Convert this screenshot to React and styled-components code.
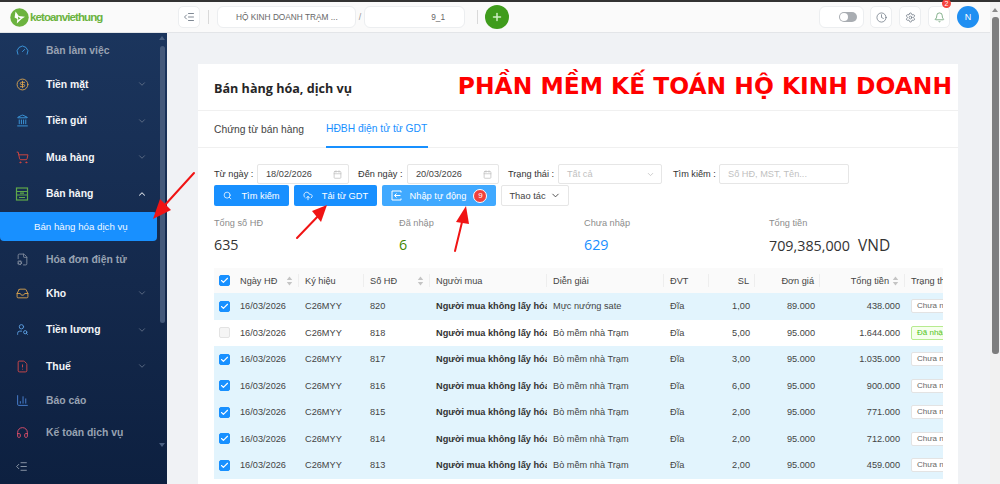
import React from "react";
import styled, { createGlobalStyle } from "styled-components";
import {
  Gauge, CircleDollarSign, Landmark, ShoppingCart, FileCog, Inbox, UserSearch, FileWarning,
  ChartColumn, Headphones, IndentDecrease, ChevronDown, ChevronUp, Plus, Settings, Bell,
  Search, CloudUpload, Calendar, Check, Clock,
} from "lucide-react";

const Global = createGlobalStyle`
  html, body { margin: 0; padding: 0; height: 484px; overflow: hidden; }
  body { font-family: "Liberation Sans", Arial, sans-serif; font-size: 9.2px; color: #333; }
  * { box-sizing: border-box; }
`;

const Page = styled.div`
  position: relative; width: 1000px; height: 484px; overflow: hidden;
  display: flex; flex-direction: column; background: #f0f2f5;
`;
const TopStrip = styled.div`height: 2px; flex: none; background: #333;`;
const Body = styled.div`flex: 1; display: flex; min-height: 0;`;
const Main = styled.div`flex: 1; display: flex; flex-direction: column; min-width: 0;`;

const Header = styled.header`
  height: 31px; flex: none; display: flex; align-items: center;
  background: #fafafa; border-bottom: 1px solid #e3e5e8; padding-right: 11px;
`;
const LogoWrap = styled.div`width: 178px; flex: none; display: flex; align-items: center; padding-left: 10px; gap: 1px;`;
const LogoText = styled.span`
  font: bold 11.5px "Liberation Sans", sans-serif; color: #6cb33f; letter-spacing: -0.9px;
`;
const IconCard = styled.button`
  width: 22px; height: 22px; flex: none; padding: 0; display: flex; align-items: center; justify-content: center;
  background: #fff; border: 1px solid #eceef0; border-radius: 5px; color: ${p => p.$c || "#5f6b78"};
  margin-left: ${p => p.$ml || 0}px;
`;
const VSep = styled.span`width: 1px; height: 14px; flex: none; background: #d9d9d9; margin: 0 ${p => p.$mr || 8}px 0 ${p => p.$ml || 8}px;`;
const Crumb = styled.div`
  height: 22px; flex: none; width: ${p => p.$w}px; padding: 0 ${p => p.$pr || 0}px 0 ${p => p.$pl || 0}px;
  display: flex; align-items: center; justify-content: ${p => p.$end ? "flex-end" : "flex-start"};
  background: #fff; border: 1px solid #eceef0; border-radius: 6px; font-size: 8.3px; color: #666; white-space: nowrap;
`;
const Slash = styled.span`width: 8px; flex: none; text-align: center; color: #999; font-size: 9px;`;
const AddBtn = styled.button`
  width: 24px; height: 24px; border-radius: 50%; border: 0; padding: 0; flex: none; background: #3f9c1c; color: #cfeec3;
  display: flex; align-items: center; justify-content: center;
`;
const Spacer = styled.div`flex: 1;`;
const ToggleCard = styled.div`
  width: 45px; height: 22px; display: flex; align-items: center; justify-content: flex-end; padding-right: 6px;
  background: #fff; border: 1px solid #eceef0; border-radius: 6px;
`;
const Toggle = styled.span`
  width: 18px; height: 10px; border-radius: 5px; background: #a9adb2; position: relative; display: block;
  &::after { content: ""; position: absolute; left: 1px; top: 1px; width: 8px; height: 8px; border-radius: 50%; background: #fff; }
`;
const BellWrap = styled.div`position: relative; margin-left: 7px; flex: none;`;
const BellBadge = styled.span`
  position: absolute; top: -7px; right: -1px; width: 9px; height: 9px; border-radius: 50%;
  background: #f5423c; color: #fff; font-size: 7px; line-height: 9px; text-align: center;
`;
const Avatar = styled.div`
  width: 22px; height: 22px; border-radius: 50%; background: #1f8ff2; color: #fff; font-size: 9px;
  display: flex; align-items: center; justify-content: center; margin-left: 7px; flex: none;
`;

const Row = styled.div`flex: 1; display: flex; min-height: 0;`;
const Side = styled.aside`
  width: 167px; flex: none; display: flex; position: relative;
  background: linear-gradient(180deg, #1b355d 0%, #14294c 55%, #0d2040 100%);
`;
const Nav = styled.nav`width: 157px; flex: none; padding-top: 1px; display: flex; flex-direction: column;`;
const NavItem = styled.div`
  height: ${p => p.$parent ? 36.5 : 32}px; flex: none; display: flex; align-items: center; padding-left: 15px; gap: 17px;
  font-weight: bold; font-size: 10.4px; color: ${p => p.$parent ? "#f3f5f8" : "#98a2b2"}; position: relative;
`;
const NavIcon = styled.span`width: 14px; display: flex; justify-content: center; flex: none; color: ${p => p.$c};`;
const NavChev = styled.span`position: absolute; left: 137px; top: 50%; margin-top: -5px; display: flex; color: ${p => p.$open ? "#dbe0e7" : "#66758c"};`;
const SubItem = styled.div`
  height: 29px; flex: none; margin-bottom: 2px; background: #1890ff; color: #f2f8ff; border-radius: 0 4px 4px 4px;
  display: flex; align-items: center; padding-left: 34px; font-size: 9.7px;
`;
const NavFoot = styled.div`margin-top: auto; height: 35px; padding-left: 15px; display: flex; align-items: center; color: #a3acba;`;
const SideBar = styled.div`
  width: 10px; flex: none; display: flex; flex-direction: column; align-items: center; padding-top: 3px;
`;
const Tri = styled.span`
  width: 0; height: 0; border-left: 3.5px solid transparent; border-right: 3.5px solid transparent; flex: none;
  ${p => p.$down ? `border-top: 4px solid ${p.$c};` : `border-bottom: 4px solid ${p.$c};`}
`;
const SideThumb = styled.div`width: 5px; height: 277px; margin-top: 6px; border-radius: 3px; background: #44597a; flex: none;`;
const SideDown = styled.div`margin-top: 120px; flex: none; display: flex;`;

const Content = styled.main`flex: 1; min-width: 0; overflow: hidden; padding: 31px 32px 0 31px;`;
const Card = styled.section`background: #fff; height: 420px; overflow: hidden;`;
const CardHead = styled.div`
  height: 47px; display: flex; align-items: center; justify-content: space-between; padding: 0 6px 0 16px;
  border-bottom: 1px solid #f0f0f0;
`;
const Title = styled.h1`margin: 2px 0 0; font: bold 12.6px "Open Sans", sans-serif; color: #262626; letter-spacing: 0;`;
const Promo = styled.div`font: bold 23.4px "DejaVu Sans", sans-serif; color: #ff0000; white-space: nowrap; margin-bottom: 3px;`;
const Tabs = styled.div`height: 37px; display: flex; padding-left: 16px; border-bottom: 1px solid #f0f0f0; gap: 21px;`;
const Tab = styled.div`
  display: flex; align-items: center; font-size: 10.3px; height: 37px; color: ${p => p.$on ? "#1890ff" : "#444"}; white-space: nowrap;
  border-bottom: ${p => p.$on ? "2px solid #1890ff" : "0"};
  width: ${p => p.$w}px;
`;
const CardBody = styled.div`padding: 16px 15px 0 16px;`;

const Filters = styled.div`display: flex; align-items: center; height: 20px;`;
const FLabel = styled.label`font-size: 9.2px; color: #333; flex: none; width: ${p => p.$w}px; white-space: nowrap;`;
const Field = styled.div`
  height: 20px; flex: none; width: ${p => p.$w}px; margin-right: ${p => p.$mr || 0}px; display: flex; align-items: center; justify-content: space-between;
  border: 1px solid #e6e6e6; border-radius: 2px; padding: 0 6px 0 ${p => p.$pl || 8}px; font-size: 9.2px;
  color: ${p => p.$ph ? "#bfbfbf" : "#444"}; background: #fff;
`;
const Actions = styled.div`display: flex; gap: 5px; height: 21px; margin-top: 1px;`;
const Btn = styled.button`
  height: 21px; width: ${p => p.$w}px; flex: none; padding: 0; border: ${p => p.$plain ? "1px solid #e6e6e6" : "0"}; border-radius: 2px;
  background: ${p => p.$plain ? "#fff" : p.$light ? "#40a9ff" : "#1890ff"}; color: ${p => p.$plain ? "#444" : "#fff"};
  display: flex; align-items: center; justify-content: center; gap: ${p => p.$gap || 9}px;
  font: 9.3px "Liberation Sans", sans-serif;
`;
const Count = styled.span`
  width: 14px; height: 14px; border-radius: 50%; background: #f0403c; color: #fff; border: 1px solid #fff; margin-left: -1px;
  display: flex; align-items: center; justify-content: center; font-size: 8px;
`;
const Stats = styled.div`display: grid; grid-template-columns: repeat(4, 185px); margin-top: 11px; height: 51px;`;
const Stat = styled.div`display: flex; flex-direction: column;`;
const StatLabel = styled.div`font-size: 9.2px; color: #8c8c8c; line-height: 13px;`;
const StatValue = styled.div`
  margin-top: 6px; font: 14.3px/18px "Open Sans", sans-serif; color: ${p => p.$c || "#333"}; white-space: nowrap;
`;
const Unit = styled.span`font-size: 15.5px; margin-left: 8px;`;
const TableClip = styled.div`width: 729px; overflow: hidden; margin-top: 0;`;
const Table = styled.table`
  border-collapse: collapse; table-layout: fixed; width: 799px;
  font-size: 9.2px;
`;
const Th = styled.th`
  height: 25px; background: #fafafa; font-weight: normal; color: #444; padding: 0 ${p => p.$cut ? 0 : 6}px 0 6px; position: relative;
  text-align: ${p => p.$right ? "right" : "left"}; white-space: nowrap; overflow: hidden;
  &::after { content: ""; display: ${p => p.$nosep ? "none" : "block"}; position: absolute; right: 0; top: 6px; bottom: 6px; width: 1px; background: #eee; }
`;
const CheckTh = styled(Th)`padding: 0;`;
const ThInner = styled.span`display: flex; align-items: center; justify-content: ${p => p.$end ? "flex-end" : "space-between"}; gap: 3px;`;
const Tr = styled.tr`background: ${p => p.$sel ? "#e2f4fd" : "#fff"};`;
const Td = styled.td`
  height: 26.5px; padding: 0 ${p => p.$right ? 5 : 4}px 0 6px; color: #444; white-space: nowrap; overflow: hidden;
  text-align: ${p => p.$right ? "right" : "left"}; font-weight: ${p => p.$b ? "bold" : "normal"};
  color: ${p => p.$b ? "#333" : "#444"};
`;
const CheckTd = styled(Td)`padding: 0;`;
const Box = styled.span`
  width: 11px; height: 11px; border-radius: 2px; margin-left: 5px; display: flex; align-items: center; justify-content: center;
  background: ${p => p.$on ? "#1890ff" : "#f5f5f5"}; border: 1px solid ${p => p.$on ? "#1890ff" : "#e3e3e3"}; color: #fff;
`;
const Tag = styled.span`
  display: inline-block; height: 14px; line-height: 12px; padding: 0 5px; border-radius: 2px; font-size: 8px; white-space: nowrap; width: 60px;
  background: ${p => p.$ok ? "#f6ffed" : "#fff"}; color: ${p => p.$ok ? "#52c41a" : "#666"};
  border: 1px solid ${p => p.$ok ? "#b7eb8f" : "#e3e3e3"};
`;

const PageBar = styled.div`
  width: 10px; flex: none; background: #f1f1f1; display: flex; flex-direction: column; align-items: center; padding-top: 6px;
`;
const PageThumb = styled.div`width: 7px; height: 337px; margin-top: 5px; border-radius: 3px; background: #7d7d7d; flex: none;`;
const Arrows = styled.svg`position: absolute; left: 0; top: 0; pointer-events: none;`;

const RegisterIcon = () => (
  <svg width="14" height="14" viewBox="0 0 14 14" fill="none" stroke="#5fa84a" strokeWidth="1.2">
    <rect x="1.5" y="1" width="11" height="12" />
    <path d="M1.5 4.5h11M1.5 8h11" />
    <path d="M4 10.5h6M5 6.2h4" />
  </svg>
);
const Logo = () => (
  <svg width="19" height="19" viewBox="0 0 19 19">
    <circle cx="9.5" cy="9.5" r="9.2" fill="#6cb33f" />
    <path d="M5.5 3.6 L8.8 8 L15 8.8 L11.5 11 L6.8 15.6 L7.4 11 L4.6 9.4 Z" fill="#fff" />
    <path d="M8 8.6 L10.6 10.4 L8.2 11.8Z" fill="#6cb33f" />
  </svg>
);
const Sorter = () => (
  <svg width="7" height="10" viewBox="0 0 7 10" fill="#c4c4c4">
    <path d="M3.5 0.5 L6.2 4 H0.8Z" />
    <path d="M3.5 9.5 L6.2 6 H0.8Z" />
  </svg>
);
const ImportIcon = () => (
  <svg width="11" height="11" viewBox="0 0 11 11" fill="none" stroke="currentColor" strokeWidth="1">
    <path d="M10 2.5V1H1v9h9V8.5" />
    <path d="M9.5 5.5H3.5M5.5 3.5l-2 2 2 2" />
  </svg>
);

const navTop = [
  { t: "Bàn làm việc", I: Gauge, c: "#3d9be0" },
  { t: "Tiền mặt", I: CircleDollarSign, c: "#d9a24f", p: 1 },
  { t: "Tiền gửi", I: Landmark, c: "#3d9be0", p: 1 },
  { t: "Mua hàng", I: ShoppingCart, c: "#d9463f", p: 1 },
];
const navBottom = [
  { t: "Hóa đơn điện tử", I: FileCog, c: "#7f8a9c" },
  { t: "Kho", I: Inbox, c: "#d9a24f", p: 1 },
  { t: "Tiền lương", I: UserSearch, c: "#5b9ee0", p: 1 },
  { t: "Thuế", I: FileWarning, c: "#d2484a", p: 1 },
  { t: "Báo cáo", I: ChartColumn, c: "#4b84d6" },
  { t: "Kế toán dịch vụ", I: Headphones, c: "#e0506a" },
];
const NavEntry = ({ t, I, c, p }) => (
  <NavItem $parent={p}>
    <NavIcon $c={c}><I size={13} strokeWidth={1.7} /></NavIcon>
    {t}
    {p && <NavChev><ChevronDown size={10} /></NavChev>}
  </NavItem>
);

const rows = [
  ["820", "Mực nướng sate", "1,00", "89.000", "438.000", 1],
  ["818", "Bò mềm nhà Trạm", "5,00", "95.000", "1.644.000", 0],
  ["817", "Bò mềm nhà Trạm", "3,00", "95.000", "1.035.000", 1],
  ["816", "Bò mềm nhà Trạm", "6,00", "95.000", "900.000", 1],
  ["815", "Bò mềm nhà Trạm", "2,00", "95.000", "771.000", 1],
  ["814", "Bò mềm nhà Trạm", "2,00", "95.000", "712.000", 1],
  ["813", "Bò mềm nhà Trạm", "2,00", "95.000", "459.000", 1],
];
const widths = [20, 65, 65, 66, 117, 117, 45, 46, 65, 85, 108];

export default function App() {
  return (
    <Page>
      <Global />
      <TopStrip />
      <Body>
        <Main>
          <Header>
            <LogoWrap><Logo /><LogoText>ketoanviethung</LogoText></LogoWrap>
            <IconCard><IndentDecrease size={12} strokeWidth={1.6} /></IconCard>
            <VSep />
            <Crumb $w={139} $pl={18}>HỘ KINH DOANH TRẠM ...</Crumb>
            <Slash>/</Slash>
            <Crumb $w={101} $end $pr={19}>9_1</Crumb>
            <VSep $ml={12} $mr={7} />
            <AddBtn><Plus size={12} strokeWidth={3} /></AddBtn>
            <Spacer />
            <ToggleCard><Toggle /></ToggleCard>
            <IconCard $ml={6}><Clock size={11} strokeWidth={1.5} /></IconCard>
            <IconCard $ml={7}><Settings size={11} strokeWidth={1.5} /></IconCard>
            <BellWrap>
              <IconCard $c="#4f8f5a"><Bell size={11} strokeWidth={1.5} /></IconCard>
              <BellBadge>2</BellBadge>
            </BellWrap>
            <Avatar>N</Avatar>
          </Header>
          <Row>
            <Side>
              <Nav>
                {navTop.map(n => <NavEntry key={n.t} {...n} />)}
                <NavItem $parent>
                  <NavIcon><RegisterIcon /></NavIcon>
                  Bán hàng
                  <NavChev $open><ChevronUp size={10} strokeWidth={2.5} /></NavChev>
                </NavItem>
                <SubItem>Bán hàng hóa dịch vụ</SubItem>
                {navBottom.map(n => <NavEntry key={n.t} {...n} />)}
                <NavFoot><IndentDecrease size={13} strokeWidth={1.5} /></NavFoot>
              </Nav>
              <SideBar>
                <Tri $c="#4a5f80" />
                <SideThumb />
                <SideDown><Tri $down $c="#4a5f80" /></SideDown>
              </SideBar>
            </Side>
            <Content>
              <Card>
                <CardHead>
                  <Title>Bán hàng hóa, dịch vụ</Title>
                  <Promo>PHẦN MỀM KẾ TOÁN HỘ KINH DOANH</Promo>
                </CardHead>
                <Tabs>
                  <Tab $w={91}>Chứng từ bán hàng</Tab>
                  <Tab $on $w={102}>HĐBH điện tử từ GDT</Tab>
                </Tabs>
                <CardBody>
                  <Filters>
                    <FLabel $w={43}>Từ ngày :</FLabel>
                    <Field $w={92} $mr={9}>18/02/2026<Calendar size={9} color="#bfbfbf" /></Field>
                    <FLabel $w={49}>Đến ngày :</FLabel>
                    <Field $w={92} $mr={9}>20/03/2026<Calendar size={9} color="#bfbfbf" /></Field>
                    <FLabel $w={50}>Trạng thái :</FLabel>
                    <Field $w={104} $mr={11} $ph>Tất cả<ChevronDown size={9} color="#bfbfbf" /></Field>
                    <FLabel $w={46}>Tìm kiếm :</FLabel>
                    <Field $w={130} $ph>Số HĐ, MST, Tên...</Field>
                  </Filters>
                  <Actions>
                    <Btn $w={75}><Search size={9} />Tìm kiếm</Btn>
                    <Btn $w={83}><CloudUpload size={10} />Tải từ GDT</Btn>
                    <Btn $w={114} $light $gap={8}><ImportIcon />Nhập tự động<Count>9</Count></Btn>
                    <Btn $w={68} $plain $gap={4}>Thao tác<ChevronDown size={11} /></Btn>
                  </Actions>
                  <Stats>
                    <Stat><StatLabel>Tổng số HĐ</StatLabel><StatValue>635</StatValue></Stat>
                    <Stat><StatLabel>Đã nhập</StatLabel><StatValue $c="#3f8600">6</StatValue></Stat>
                    <Stat><StatLabel>Chưa nhập</StatLabel><StatValue $c="#1890ff">629</StatValue></Stat>
                    <Stat><StatLabel>Tổng tiền</StatLabel><StatValue>709,385,000<Unit>VND</Unit></StatValue></Stat>
                  </Stats>
                  <TableClip>
                    <Table>
                      <colgroup>{widths.map((w, i) => <col key={i} width={w} />)}</colgroup>
                      <thead>
                        <tr>
                          <CheckTh $nosep><Box $on><Check size={9} strokeWidth={3} /></Box></CheckTh>
                          <Th><ThInner>Ngày HĐ<Sorter /></ThInner></Th>
                          <Th>Ký hiệu</Th>
                          <Th><ThInner>Số HĐ<Sorter /></ThInner></Th>
                          <Th>Người mua</Th>
                          <Th>Diễn giải</Th>
                          <Th>ĐVT</Th>
                          <Th $right>SL</Th>
                          <Th $right>Đơn giá</Th>
                          <Th $right><ThInner $end>Tổng tiền<Sorter /></ThInner></Th>
                          <Th $cut $nosep>Trạng thái</Th>
                        </tr>
                      </thead>
                      <tbody>
                        {rows.map(r => (
                          <Tr key={r[0]} $sel={r[5]}>
                            <CheckTd><Box $on={r[5]}>{r[5] ? <Check size={9} strokeWidth={3} /> : null}</Box></CheckTd>
                            <Td>16/03/2026</Td>
                            <Td>C26MYY</Td>
                            <Td>{r[0]}</Td>
                            <Td $b>Người mua không lấy hóa đơn</Td>
                            <Td>{r[1]}</Td>
                            <Td>Đĩa</Td>
                            <Td $right>{r[2]}</Td>
                            <Td $right>{r[3]}</Td>
                            <Td $right>{r[4]}</Td>
                            <Td><Tag $ok={!r[5]}>{r[5] ? "Chưa nhập" : "Đã nhập"}</Tag></Td>
                          </Tr>
                        ))}
                      </tbody>
                    </Table>
                  </TableClip>
                </CardBody>
              </Card>
            </Content>
          </Row>
        </Main>
        <PageBar>
          <Tri $c="#8a8a8a" />
          <PageThumb />
        </PageBar>
      </Body>
      <Arrows width="1000" height="484" viewBox="0 0 1000 484" fill="none">
        <g stroke="#f01414" strokeWidth="2" strokeLinecap="round"><path d="M194 173 L164 206" /><path d="M297 238 L322 212" /><path d="M455 251 L463 218" /></g>
        <g fill="#f01414">
          <path d="M153 219 L160 199 L171 210 Z" />
          <path d="M327 205 L321 222 L312 211 Z" />
          <path d="M466 206 L469 224 L456 222 Z" />
        </g>
      </Arrows>
    </Page>
  );
}
